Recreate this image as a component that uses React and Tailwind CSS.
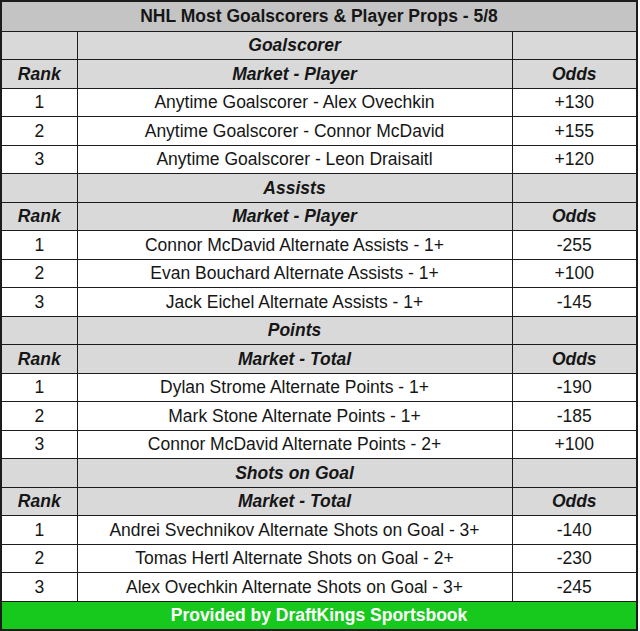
const sections = [
  {
    name: 'Goalscorer',
    col: 'Market - Player',
    rows: [
      ['Anytime Goalscorer - Alex Ovechkin', '+130'],
      ['Anytime Goalscorer - Connor McDavid', '+155'],
      ['Anytime Goalscorer - Leon Draisaitl', '+120'],
    ],
  },
  {
    name: 'Assists',
    col: 'Market - Player',
    rows: [
      ['Connor McDavid Alternate Assists - 1+', '-255'],
      ['Evan Bouchard Alternate Assists - 1+', '+100'],
      ['Jack Eichel Alternate Assists - 1+', '-145'],
    ],
  },
  {
    name: 'Points',
    col: 'Market - Total',
    rows: [
      ['Dylan Strome Alternate Points - 1+', '-190'],
      ['Mark Stone Alternate Points - 1+', '-185'],
      ['Connor McDavid Alternate Points - 2+', '+100'],
    ],
  },
  {
    name: 'Shots on Goal',
    col: 'Market - Total',
    rows: [
      ['Andrei Svechnikov Alternate Shots on Goal - 3+', '-140'],
      ['Tomas Hertl Alternate Shots on Goal - 2+', '-230'],
      ['Alex Ovechkin Alternate Shots on Goal - 3+', '-245'],
    ],
  },
]

const cell = 'border border-[#1c1c1c] text-center p-0 pt-[1px] h-[28.5px] leading-none'

export default function App() {
  return (
    <div className="h-[631px] w-[640px] bg-white font-['Liberation_Sans',Arial,sans-serif] text-[17.5px] text-[#161616]">
      <table className="w-[638px] table-fixed border-collapse border-2 border-[#1c1c1c]">
        <colgroup>
          <col className="w-[76px]" />
          <col className="w-[435px]" />
          <col />
        </colgroup>
        <tbody>
          <tr>
            <td colSpan={3} className={`${cell} h-[30px] bg-[#c4c4c4] font-bold`}>
              NHL Most Goalscorers &amp; Player Props - 5/8
            </td>
          </tr>
          {sections.map((s) => (
            <Section key={s.name} s={s} />
          ))}
          <tr>
            <td colSpan={3} className={`${cell} h-[27px] bg-[#16c91c] font-bold text-white`}>
              Provided by DraftKings Sportsbook
            </td>
          </tr>
        </tbody>
      </table>
    </div>
  )
}

function Section({ s }) {
  return (
    <>
      <tr className="bg-[#d9d9d9]">
        <td className={cell} />
        <td className={`${cell} font-bold italic`}>{s.name}</td>
        <td className={cell} />
      </tr>
      <tr className="bg-[#d9d9d9] font-bold italic">
        <td className={cell}>Rank</td>
        <td className={cell}>{s.col}</td>
        <td className={cell}>Odds</td>
      </tr>
      {s.rows.map(([market, odds], i) => (
        <tr key={market}>
          <td className={cell}>{i + 1}</td>
          <td className={cell}>{market}</td>
          <td className={cell}>{odds}</td>
        </tr>
      ))}
    </>
  )
}
